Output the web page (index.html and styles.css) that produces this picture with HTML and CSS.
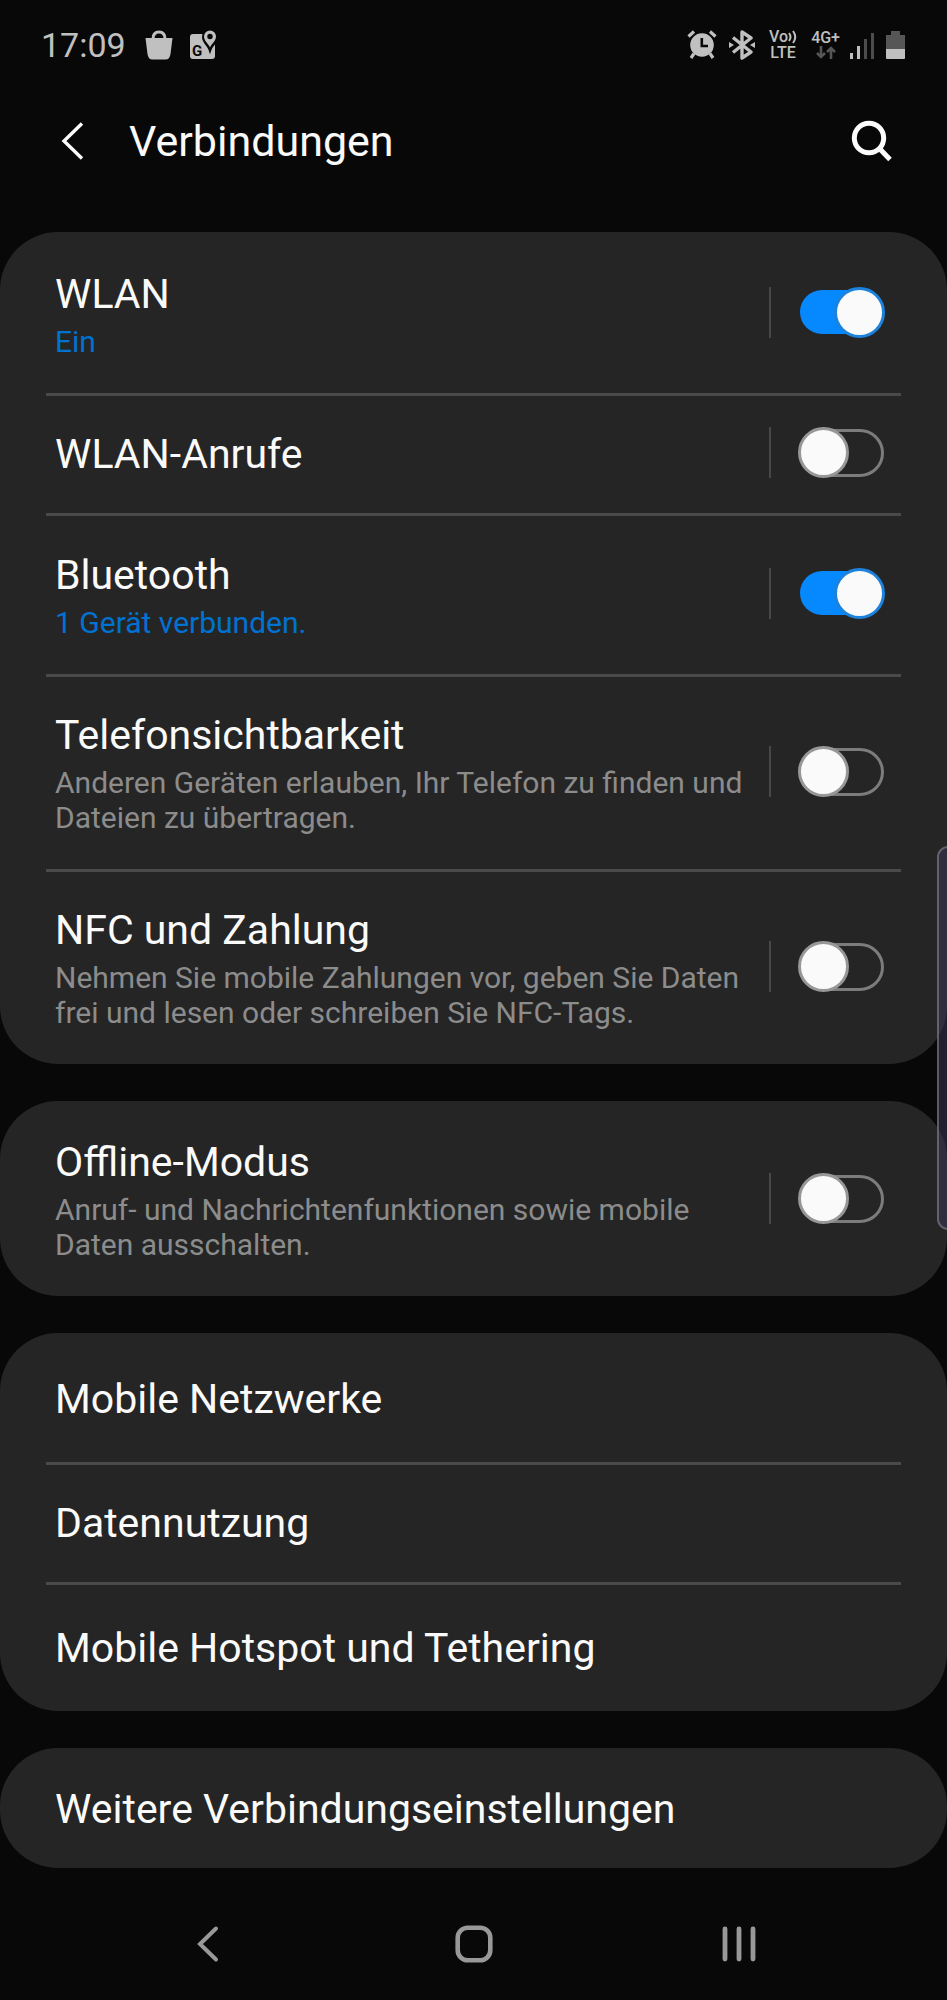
FILE: index.html
```html
<!DOCTYPE html>
<html lang="de">
<head>
    <meta charset="UTF-8">
    <meta name="viewport" content="width=device-width, initial-scale=1.0">
    <title>Verbindungen</title>
    <link rel="stylesheet" href="styles.css">
</head>
<body>
    <div class="statusbar">
        <div class="statusbar-left">
            <span class="clock">17:09</span>
            <!-- shopping bag -->
            <svg class="icon-bag" width="28" height="30" viewBox="0 0 28 30" aria-hidden="true">
                <path d="M8 9 C8 4.500 10 2 14 2 S20 4.500 20 9" fill="none" stroke="#c0c0c0" stroke-width="3"/>
                <path d="M0.500 8 H27.500 L25.500 24 Q24.800 29.500 20.500 29.500 H7.500 Q3.200 29.500 2.500 24 Z" fill="#c0c0c0"/>
            </svg>
            <!-- maps -->
            <svg width="28" height="30" viewBox="0 0 28 30" aria-hidden="true">
                <rect x="1" y="4" width="25" height="25" rx="3" fill="#c0c0c0"/>
                <text class="maps-letter" x="3" y="26">G</text>
                <path d="M21 19.500 C19.500 15 14.500 12.500 14.500 7 A6.500 6.500 0 0 1 27.500 7 C27.500 12.500 22.500 15 21 19.500 Z" fill="#c0c0c0" stroke="#080808" stroke-width="3"/>
                <path d="M21 17.500 C19.500 13.500 15 11 15 6.500 A6 6 0 0 1 27 6.500 C27 11 22.500 13.500 21 17.500 Z" fill="#c0c0c0"/>
                <circle cx="21" cy="6.500" r="2.700" fill="#080808"/>
            </svg>
        </div>
        <div class="statusbar-right">
            <!-- alarm -->
            <svg class="icon-alarm" width="30" height="30" viewBox="0 0 30 30" aria-hidden="true">
                <circle cx="15" cy="15" r="11.800" fill="#c0c0c0"/>
                <path d="M1.500 6.500 L7 1.500 M28.500 6.500 L23 1.500 M7 23.500 L4 28 M23 23.500 L26 28" stroke="#c0c0c0" stroke-width="3.200"/>
                <path d="M14.800 8 V16 H21" fill="none" stroke="#080808" stroke-width="2.600"/>
            </svg>
            <!-- bluetooth -->
            <svg width="26" height="30" viewBox="0 0 26 30" aria-hidden="true">
                <path d="M4 7.500 L22 22 L13 28 V2 L22 8 L4 22.500" fill="none" stroke="#c0c0c0" stroke-width="3.400" stroke-linejoin="round"/>
                <path d="M0 12 L5 15 L0 18 Z M26 12 L21 15 L26 18 Z" fill="#c0c0c0"/>
            </svg>
            <span class="volte">
                <span class="volte-top">Vo
                    <svg width="9" height="14" viewBox="0 0 9 14" aria-hidden="true">
                        <path d="M1 3 Q4 7 1 11 M5 1 Q9.500 7 5 13" fill="none" stroke="#c0c0c0" stroke-width="2"/>
                    </svg>
                </span>
                <span>LTE</span>
            </span>
            <span class="network">
                <span>4G+</span>
                <svg width="20" height="13" viewBox="0 0 20 13" aria-hidden="true">
                    <path d="M5 0 V11 M1 7 L5 11 L9 7 M15 13 V2 M11 6 L15 2 L19 6" fill="none" stroke="#565656" stroke-width="2.600"/>
                </svg>
            </span>
            <!-- signal -->
            <svg width="24" height="28" viewBox="0 0 24 28" aria-hidden="true">
                <path d="M1.500 22 V28 M8.500 15 V28" stroke="#c0c0c0" stroke-width="3"/>
                <path d="M15.500 8 V28 M22.500 2 V28" stroke="#4c4c4c" stroke-width="3"/>
            </svg>
            <!-- battery -->
            <svg class="icon-battery" width="19" height="28" viewBox="0 0 19 28" aria-hidden="true">
                <path d="M0 4 H5 V0 H14 V4 H19 V18 H0 Z" fill="#565656"/>
                <path d="M0 18 H19 V27 Q19 28 18 28 H1 Q0 28 0 27 Z" fill="#c0c0c0"/>
            </svg>
        </div>
    </div>

    <header class="header">
        <button class="icon-btn" type="button" aria-label="Zurück">
            <svg width="24" height="38" viewBox="0 0 24 38" aria-hidden="true">
                <path d="M22 1.500 L4 19 L22 36.500" fill="none" stroke="#fcfcfc" stroke-width="3.400"/>
            </svg>
        </button>
        <h1>Verbindungen</h1>
        <button class="icon-btn" type="button" aria-label="Suchen">
            <svg width="42" height="42" viewBox="0 0 42 42" aria-hidden="true">
                <circle cx="18" cy="18" r="14.700" fill="none" stroke="#fcfcfc" stroke-width="5"/>
                <path d="M28 28 L39 39.500" stroke="#fcfcfc" stroke-width="5"/>
            </svg>
        </button>
    </header>

    <main class="settings">
        <section class="card">
            <div class="row row-status">
                <label class="text" for="wlan">
                    <span class="title">WLAN</span>
                    <span class="summary active">Ein</span>
                </label>
                <div class="control"><input class="switch" type="checkbox" id="wlan" checked></div>
            </div>
            <div class="row">
                <label class="text" for="wlan-calls">
                    <span class="title">WLAN-Anrufe</span>
                </label>
                <div class="control"><input class="switch" type="checkbox" id="wlan-calls"></div>
            </div>
            <div class="row row-status">
                <label class="text" for="bluetooth">
                    <span class="title">Bluetooth</span>
                    <span class="summary active">1 Gerät verbunden.</span>
                </label>
                <div class="control"><input class="switch" type="checkbox" id="bluetooth" checked></div>
            </div>
            <div class="row">
                <label class="text" for="visibility">
                    <span class="title">Telefonsichtbarkeit</span>
                    <span class="summary">Anderen Geräten erlauben, Ihr Telefon zu finden und Dateien zu übertragen.</span>
                </label>
                <div class="control"><input class="switch" type="checkbox" id="visibility"></div>
            </div>
            <div class="row">
                <label class="text" for="nfc">
                    <span class="title">NFC und Zahlung</span>
                    <span class="summary">Nehmen Sie mobile Zahlungen vor, geben Sie Daten frei und lesen oder schreiben Sie NFC-Tags.</span>
                </label>
                <div class="control"><input class="switch" type="checkbox" id="nfc"></div>
            </div>
        </section>

        <section class="card">
            <div class="row">
                <label class="text" for="offline">
                    <span class="title">Offline-Modus</span>
                    <span class="summary">Anruf- und Nachrichtenfunktionen sowie mobile Daten ausschalten.</span>
                </label>
                <div class="control"><input class="switch" type="checkbox" id="offline"></div>
            </div>
        </section>

        <section class="card">
            <a class="row row-tall" href="#"><span class="title">Mobile Netzwerke</span></a>
            <a class="row" href="#"><span class="title">Datennutzung</span></a>
            <a class="row row-tall" href="#"><span class="title">Mobile Hotspot und Tethering</span></a>
        </section>

        <section class="card">
            <a class="row" href="#"><span class="title">Weitere Verbindungseinstellungen</span></a>
        </section>
    </main>

    <nav class="navbar">
        <button class="icon-btn" type="button" aria-label="Zurück">
            <svg width="24" height="38" viewBox="0 0 24 38" aria-hidden="true">
                <path d="M20 3.500 L4 19 L20 34.500" fill="none" stroke="#989898" stroke-width="4" stroke-linecap="round"/>
            </svg>
        </button>
        <button class="icon-btn" type="button" aria-label="Startbildschirm">
            <svg width="38" height="38" viewBox="0 0 38 38" aria-hidden="true">
                <rect x="2.700" y="2.700" width="32.600" height="32.600" rx="10" fill="none" stroke="#989898" stroke-width="4.600"/>
            </svg>
        </button>
        <button class="icon-btn" type="button" aria-label="Letzte Apps">
            <svg width="36" height="38" viewBox="0 0 36 38" aria-hidden="true">
                <path d="M4 4 V34 M18 4 V34 M32 4 V34" stroke="#989898" stroke-width="4.800" stroke-linecap="round"/>
            </svg>
        </button>
    </nav>

    <div class="edge-handle"></div>
</body>
</html>
```
FILE: styles.css
```css
*,
*::before,
*::after {
    margin: 0;
    padding: 0;
    box-sizing: border-box;
}

body {
    position: relative;
    min-height: 100vh;
    display: flex;
    flex-direction: column;
    background: #080808;
    color: #fafafa;
    font-family: Roboto, "Liberation Sans", sans-serif;
    overflow-x: hidden;
}

svg {
    display: block;
    flex: none;
}

/* Status bar */
.statusbar {
    display: flex;
    justify-content: space-between;
    align-items: center;
    height: 89px;
    padding: 0 42px 0 41px;
    color: #c0c0c0;
}

.statusbar-left,
.statusbar-right {
    display: flex;
    align-items: center;
}

.statusbar-left {
    gap: 16px;
}

.statusbar-right {
    gap: 10px;
}

.clock {
    font-size: 34px;
    line-height: 40px;
}

.icon-bag {
    margin-left: 3px;
}

.maps-letter {
    fill: #080808;
    font-size: 15px;
    font-weight: 700;
}

.icon-alarm {
    margin-right: 2px;
}

.icon-battery {
    margin-left: 2px;
}

.volte,
.network {
    display: flex;
    flex-direction: column;
    align-items: center;
    font-size: 16px;
    font-weight: 500;
    line-height: 16px;
}

.volte {
    margin: 0 4px;
}

.volte-top {
    display: flex;
    align-items: center;
}

/* Header */
.header {
    display: flex;
    align-items: center;
    height: 103px;
    margin-bottom: 40px;
    padding: 0 54px 0 60px;
}

.header h1 {
    flex: 1;
    margin-left: 45px;
    font-size: 43px;
    font-weight: 400;
    line-height: 50px;
}

.icon-btn {
    background: none;
    border: none;
    cursor: pointer;
}

/* Cards */
.settings {
    display: flex;
    flex-direction: column;
    gap: 37px;
}

.card {
    padding: 0 46px;
    background: #252525;
    border-radius: 58px;
}

.row {
    display: flex;
    align-items: center;
    padding: 34px 16px 34px 9px;
    border-top: 3px solid #4a4a4a;
    color: inherit;
    text-decoration: none;
}

.row:first-child {
    border-top-color: transparent;
}

.row-status {
    min-height: 161px;
}

.row-tall {
    padding-top: 39px;
    padding-bottom: 38px;
}

.text {
    flex: 1;
    display: flex;
    flex-direction: column;
    gap: 5px;
    padding-right: 24px;
    cursor: pointer;
}

.title {
    font-size: 41px;
    line-height: 49px;
}

.summary {
    color: #8c8c8c;
    font-size: 30px;
    line-height: 35px;
}

.summary.active {
    color: #0072d2;
}

/* Switch with its separator, centred on the row including the divider */
.control {
    display: flex;
    gap: 27px;
    margin: -5px 0 -1px;
}

.control::before {
    content: "";
    width: 2px;
    background: #484848;
}

.switch {
    appearance: none;
    position: relative;
    width: 87px;
    height: 51px;
    cursor: pointer;
}

.switch::before {
    content: "";
    position: absolute;
    inset: 2px 1px 1px 3px;
    border: 3px solid #7c7c7c;
    border-radius: 24px;
}

.switch::after {
    content: "";
    position: absolute;
    top: 0;
    left: 0;
    width: 51px;
    height: 51px;
    border: 3px solid #979797;
    border-radius: 50%;
    background: #fafafa;
}

.switch:checked::before {
    inset: 3px 1px 4px 2px;
    border: none;
    background: #0689ff;
}

.switch:checked::after {
    left: auto;
    right: 0;
    border-color: #1c82dc;
}

/* Navigation bar */
.navbar {
    display: flex;
    align-items: center;
    height: 132px;
    padding: 20px 75px 0;
}

.navbar .icon-btn {
    flex: 1;
}

.navbar svg {
    margin: 0 auto;
}

/* Edge panel handle */
.edge-handle {
    position: absolute;
    top: 846px;
    right: -12px;
    width: 22px;
    height: 384px;
    border: 2px solid rgba(150, 150, 155, 0.5);
    border-radius: 12px;
    background: rgba(60, 54, 90, 0.5);
}
```
